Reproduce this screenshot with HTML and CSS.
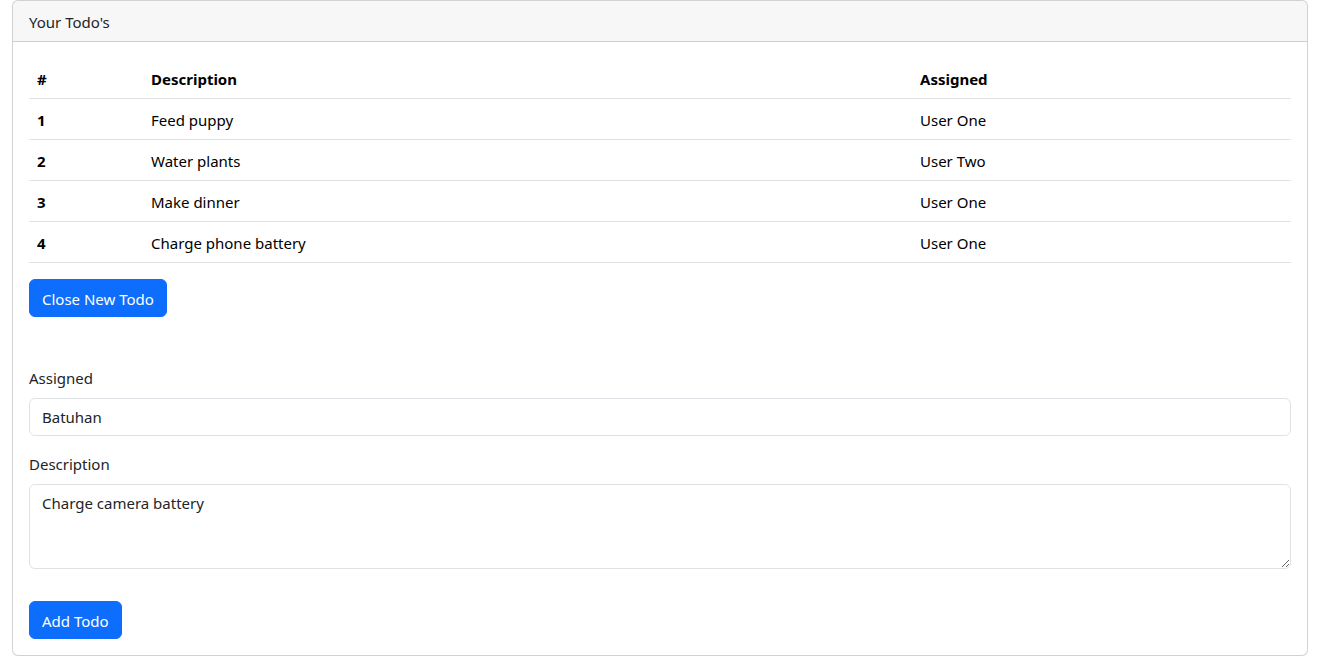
FILE: index.html
```html
<!DOCTYPE html>
<html lang="en">
<head>
<meta charset="utf-8">
<title>Todos</title>
<link rel="stylesheet" href="styles.css">
</head>
<body>
<div class="container">
  <div class="card">
    <div class="card-header">Your Todo's</div>
    <div class="card-body">
      <table class="table">
        <thead>
          <tr><th class="c1">#</th><th class="c2">Description</th><th class="c3">Assigned</th></tr>
        </thead>
        <tbody>
          <tr><th>1</th><td>Feed puppy</td><td>User One</td></tr>
          <tr><th>2</th><td>Water plants</td><td>User Two</td></tr>
          <tr><th>3</th><td>Make dinner</td><td>User One</td></tr>
          <tr><th>4</th><td>Charge phone battery</td><td>User One</td></tr>
        </tbody>
      </table>
      <button class="btn">Close New Todo</button>
      <form class="form">
        <div class="field">
          <label class="label">Assigned</label>
          <input class="control" type="text" value="Batuhan">
        </div>
        <div class="field">
          <label class="label">Description</label>
          <textarea class="control area" rows="3">Charge camera battery</textarea>
        </div>
        <button class="btn submit" type="button">Add Todo</button>
      </form>
    </div>
  </div>
</div>
</body>
</html>
```

FILE: styles.css
```css
* { box-sizing: border-box; }
html, body { margin: 0; padding: 0; background: #fff; }
body {
  font-family: "Noto Sans", "Open Sans", sans-serif;
  font-size: 16px;
  line-height: 24px;
  color: #212529;
}
.container { padding: 0 12px; }
.card {
  border: 1px solid rgba(0,0,0,.175);
  border-radius: 6px;
  background: #fff;
}
.card-header {
  padding: 9px 16px 7px;
  background: rgba(0,0,0,.03);
  border-bottom: 1px solid rgba(0,0,0,.175);
  border-radius: 5px 5px 0 0;
  font-size: 15px;
}
.card-body { padding: 16px; }
.table {
  width: 100%;
  border-collapse: collapse;
  margin-bottom: 16px;
  color: #000;
  font-size: 15px;
}
.table th, .table td {
  padding: 9px 8px 7px;
  text-align: left;
  border-bottom: 1px solid #dee2e6;
  vertical-align: top;
  line-height: 24px;
}
.table th { font-weight: 700; }
.c1 { width: 114px; }
.c3 { width: 379px; }
.btn {
  display: inline-block;
  font-family: inherit;
  font-size: 15px;
  line-height: 24px;
  padding: 7px 12px 5px;
  color: #fff;
  background: #0d6efd;
  border: 1px solid #0d6efd;
  border-radius: 6px;
  cursor: pointer;
}
.form { margin-top: 49px; }
.field { margin-bottom: 16px; }
.label {
  display: block;
  margin-bottom: 8px;
  font-size: 15px;
}
.control {
  display: block;
  width: 100%;
  font-family: inherit;
  font-size: 15px;
  line-height: 24px;
  padding: 6px 12px;
  color: #212529;
  background: #fff;
  border: 1px solid #dee2e6;
  border-radius: 6px;
}
.area { height: 85px; resize: vertical; }
.submit { margin-top: 16px; }
```
